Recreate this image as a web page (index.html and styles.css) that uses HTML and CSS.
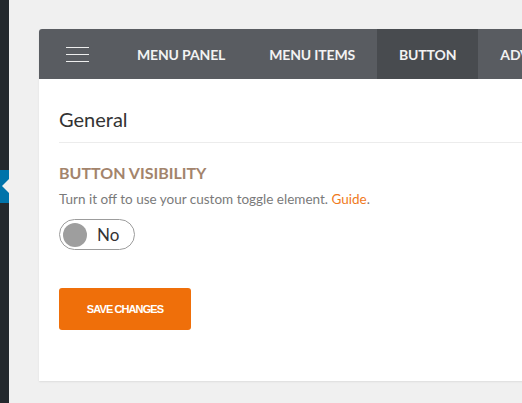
FILE: index.html
```html
<!DOCTYPE html>
<html lang="en">
<head>
    <meta charset="UTF-8">
    <title>Button settings</title>
    <link rel="stylesheet" href="styles.css">
</head>
<body>
    <div class="adminbar">
        <div class="adminbar-current"></div>
    </div>

    <div class="wrap">
        <div class="card">
            <div class="tabs">
                <div class="tab-menu">
                    <span class="burger"></span>
                </div>
                <div class="tab">Menu Panel</div>
                <div class="tab">Menu Items</div>
                <div class="tab active">Button</div>
                <div class="tab">Advanced</div>
            </div>

            <div class="card-body">
                <h2 class="section-title">General</h2>

                <div class="field">
                    <div class="field-label">Button Visibility</div>
                    <div class="field-desc">Turn it off to use your custom toggle element. <a href="#">Guide</a>.</div>
                    <label class="toggle">
                        <span class="toggle-knob"></span>
                        <span class="toggle-text">No</span>
                    </label>
                </div>

                <button type="button" class="save-btn">Save Changes</button>
            </div>
        </div>
    </div>
</body>
</html>
```

FILE: styles.css
```css
html, body {
    height: 100%;
}
body {
    margin: 0;
    display: flex;
    background-color: #f0f0f0;
    font-family: Lato, "Open Sans", Arial, sans-serif;
    overflow: hidden;
}
.adminbar {
    width: 9px;
    flex-shrink: 0;
    background-color: #23282d;
    padding-top: 170px;
}
.adminbar-current {
    position: relative;
    height: 33px;
    background-color: #0073aa;
}
.adminbar-current::after {
    content: "";
    position: absolute;
    right: 0;
    top: 9px;
    border-top: 7px solid transparent;
    border-bottom: 7px solid transparent;
    border-right: 7px solid #f0f0f0;
}
.wrap {
    padding: 29px 0 0 30px;
}
.card {
    width: 560px;
    background-color: white;
    border-radius: 3px 3px 0 0;
    box-shadow: 0 1px 2px rgba(0, 0, 0, 0.08);
}
.tabs {
    display: flex;
    height: 50px;
    background-color: #595c61;
    border-radius: 3px 3px 0 0;
    color: #f2f2f2;
    overflow: hidden;
}
.tab-menu {
    width: 76px;
    flex-shrink: 0;
    display: flex;
    align-items: center;
    justify-content: center;
}
.burger {
    display: block;
    width: 23px;
    height: 15px;
    border-top: 1px solid #eee;
    border-bottom: 1px solid #eee;
    box-sizing: border-box;
    position: relative;
}
.burger::before {
    content: "";
    position: absolute;
    left: 0;
    right: 0;
    top: 6px;
    border-top: 1px solid #eee;
}
.tab {
    flex-shrink: 0;
    display: flex;
    align-items: center;
    padding: 0 22px;
    font-size: 14px;
    font-weight: bold;
    letter-spacing: -0.15px;
    text-transform: uppercase;
    white-space: nowrap;
}
.tab.active {
    background-color: #484b4f;
}
.card-body {
    padding: 28px 0 51px 20px;
}
.section-title {
    margin: 0;
    padding-bottom: 11px;
    border-bottom: 1px solid #ececec;
    font-size: 20px;
    font-weight: normal;
    line-height: 24px;
    color: #333;
}
.field {
    margin-top: 20px;
}
.field-label {
    font-size: 16px;
    line-height: 20px;
    font-weight: bold;
    text-transform: uppercase;
    color: #a3846c;
}
.field-desc {
    margin-top: 7px;
    font-size: 13.5px;
    line-height: 18px;
    color: #7a7a7a;
}
.field-desc a {
    color: #f07a1c;
    text-decoration: none;
}
.toggle {
    margin-top: 11px;
    display: flex;
    align-items: center;
    width: 76px;
    height: 31px;
    box-sizing: border-box;
    border: 1px solid #9c9c9c;
    border-radius: 16px;
    padding-left: 3px;
}
.toggle-knob {
    width: 24px;
    height: 24px;
    border-radius: 50%;
    background-color: #9e9e9e;
}
.toggle-text {
    margin-left: 10px;
    font-size: 17px;
    color: #333;
}
.save-btn {
    display: block;
    margin-top: 38px;
    width: 132px;
    height: 42px;
    border: none;
    border-radius: 3px;
    background-color: #ef6f0a;
    color: white;
    font-family: "Liberation Sans", Arial, sans-serif;
    font-size: 11px;
    font-weight: bold;
    letter-spacing: -0.9px;
    text-transform: uppercase;
    cursor: pointer;
}
```
